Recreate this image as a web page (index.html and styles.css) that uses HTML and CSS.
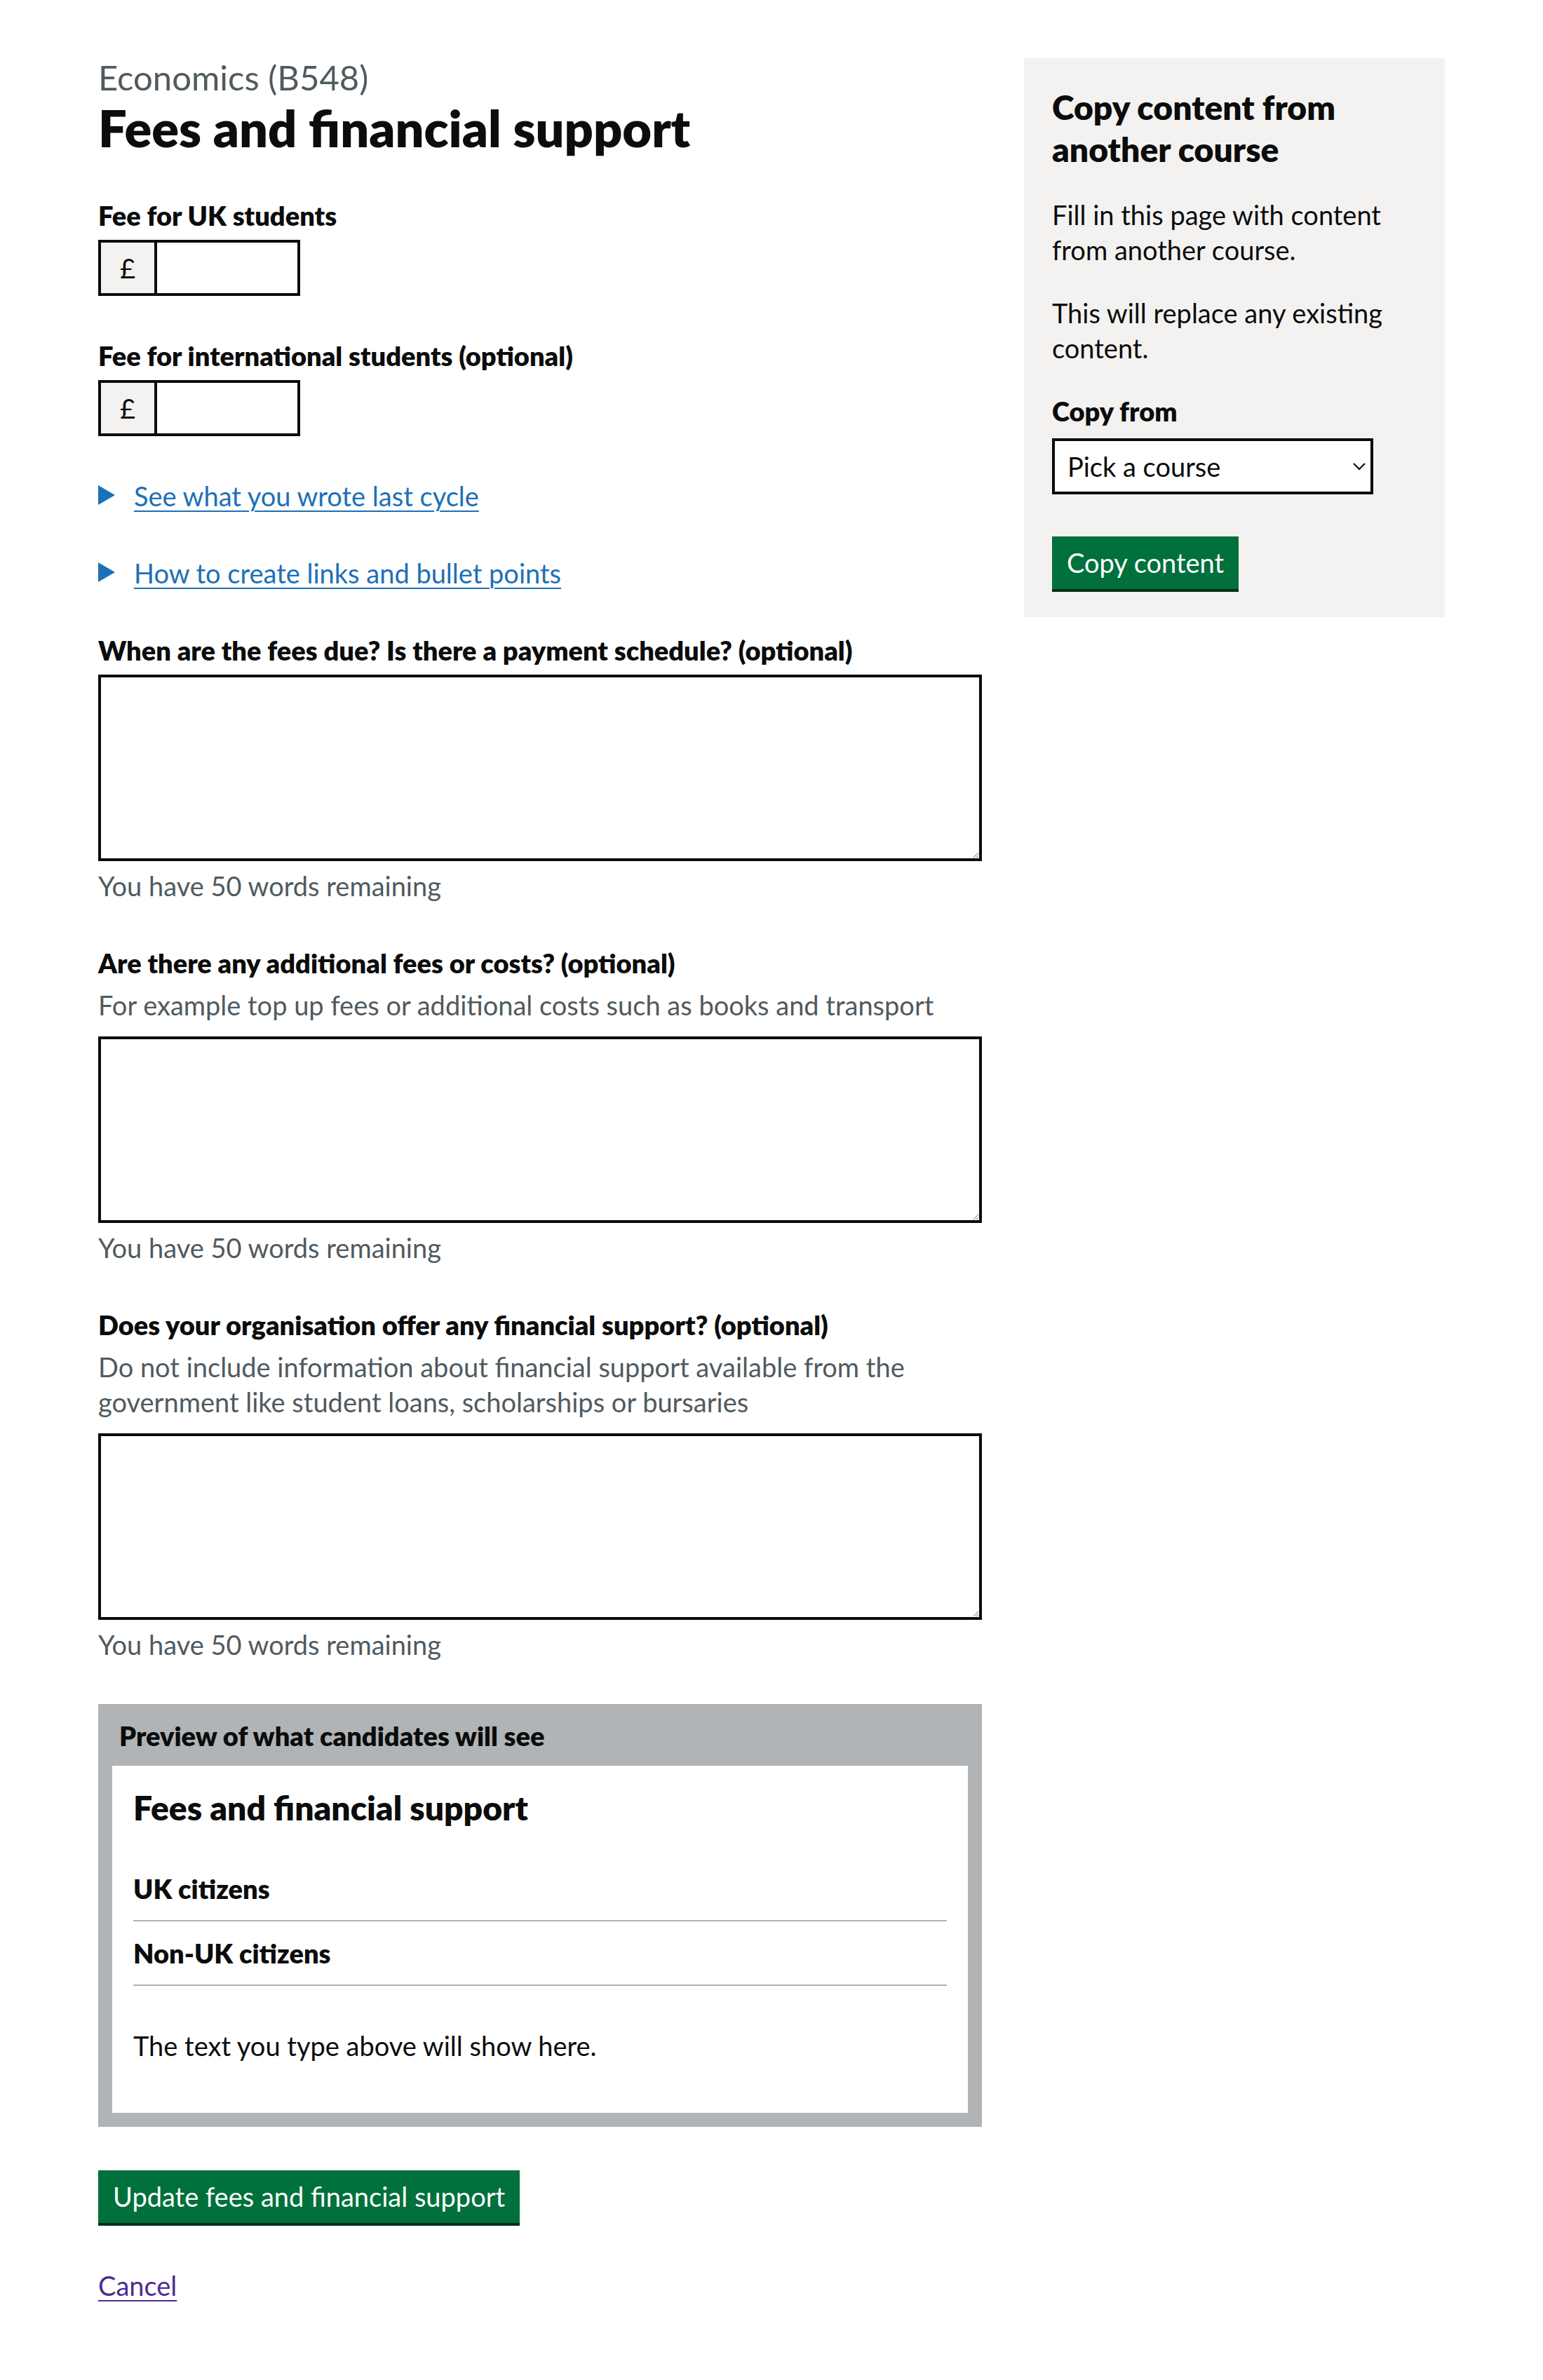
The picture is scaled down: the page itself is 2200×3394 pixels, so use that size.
FILE: index.html
```html
<!DOCTYPE html>
<html lang="en">
<head>
<meta charset="utf-8">
<title>Fees and financial support</title>
<link rel="stylesheet" href="styles.css">
</head>
<body>
<div class="page">
  <div class="layout">
    <main class="main-col">
      <span class="caption">Economics (B548)</span>
      <h1 class="title">Fees and financial support</h1>

      <div class="field">
        <label class="label" for="fee-uk">Fee for UK students</label>
        <div class="input-wrap">
          <span class="prefix">£</span>
          <input class="input-fee" id="fee-uk" type="text">
        </div>
      </div>

      <div class="field">
        <label class="label" for="fee-int">Fee for international students (optional)</label>
        <div class="input-wrap">
          <span class="prefix">£</span>
          <input class="input-fee" id="fee-int" type="text">
        </div>
      </div>

      <details class="details">
        <summary class="summary"><span class="arrow"></span><span class="summary-text">See what you wrote last cycle</span></summary>
      </details>

      <details class="details">
        <summary class="summary"><span class="arrow"></span><span class="summary-text">How to create links and bullet points</span></summary>
      </details>

      <div class="field">
        <label class="label" for="fee-schedule">When are the fees due? Is there a payment schedule? (optional)</label>
        <textarea class="textarea" id="fee-schedule"></textarea>
        <div class="count">You have 50 words remaining</div>
      </div>

      <div class="field">
        <label class="label" for="fee-details">Are there any additional fees or costs? (optional)</label>
        <div class="hint">For example top up fees or additional costs such as books and transport</div>
        <textarea class="textarea" id="fee-details"></textarea>
        <div class="count">You have 50 words remaining</div>
      </div>

      <div class="field">
        <label class="label" for="financial-support">Does your organisation offer any financial support? (optional)</label>
        <div class="hint">Do not include information about financial support available from the government like student loans, scholarships or bursaries</div>
        <textarea class="textarea" id="financial-support"></textarea>
        <div class="count">You have 50 words remaining</div>
      </div>

      <div class="preview">
        <div class="preview-header">Preview of what candidates will see</div>
        <div class="preview-body">
          <h2 class="preview-title">Fees and financial support</h2>
          <dl class="summary-list">
            <div class="summary-row"><dt class="summary-key">UK citizens</dt></div>
            <div class="summary-row"><dt class="summary-key">Non-UK citizens</dt></div>
          </dl>
          <p class="preview-text">The text you type above will show here.</p>
        </div>
      </div>

      <button class="button button-main" type="submit">Update fees and financial support</button>

      <p class="cancel-wrap"><a class="cancel" href="#">Cancel</a></p>
    </main>

    <aside class="sidebar">
      <h2 class="sidebar-title">Copy content from another course</h2>
      <p class="body-text">Fill in this page with content from another course.</p>
      <p class="body-text">This will replace any existing content.</p>
      <label class="label label-select" for="copy-from">Copy from</label>
      <div class="select-wrap">
        <select class="select" id="copy-from">
          <option>Pick a course</option>
        </select>
        <svg class="chevron" width="20" height="12" viewBox="0 0 20 12" aria-hidden="true">
          <path d="M2 2 L10 10 L18 2" fill="none" stroke="#0b0c0c" stroke-width="2.2"/>
        </svg>
      </div>
      <button class="button button-copy" type="button">Copy content</button>
    </aside>
  </div>
</div>
</body>
</html>
```

FILE: styles.css
```css
html, body {
  margin: 0;
  padding: 0;
  background: #ffffff;
}

body {
  font-family: Lato, "Liberation Sans", Arial, sans-serif;
  color: #0b0c0c;
}

.page {
  width: 1920px;
  margin: 0 auto;
  padding-top: 80px;
}

.layout {
  display: flex;
  align-items: flex-start;
  gap: 60px;
}

.main-col {
  width: 1260px;
  flex: 0 0 1260px;
  display: flex;
  flex-direction: column;
  align-items: flex-start;
}

.caption {
  display: block;
  font-size: 49px;
  line-height: 60px;
  color: #505a5f;
  margin-bottom: 2px;
}

.title {
  font-size: 72px;
  line-height: 80px;
  font-weight: 800;
  margin: 0 0 60px;
}

.field {
  display: flex;
  flex-direction: column;
  align-items: flex-start;
  margin-bottom: 60px;
  width: 100%;
}

.label {
  display: block;
  font-size: 38px;
  line-height: 50px;
  font-weight: 800;
  margin-bottom: 10px;
}

.input-wrap {
  display: flex;
  height: 80px;
}

.prefix {
  box-sizing: border-box;
  width: 80px;
  height: 80px;
  display: flex;
  align-items: center;
  justify-content: center;
  background: #f3f2f1;
  border: 4px solid #0b0c0c;
  border-right: 0;
  font-size: 38px;
}

.input-fee {
  box-sizing: border-box;
  width: 208px;
  height: 80px;
  margin: 0;
  padding: 0 10px;
  border: 4px solid #0b0c0c;
  border-radius: 0;
  font-family: inherit;
  font-size: 38px;
}

.details {
  margin-bottom: 60px;
}

.summary {
  display: flex;
  align-items: center;
  list-style: none;
  cursor: pointer;
  font-size: 38px;
  line-height: 50px;
  color: #1d70b8;
}

.summary::-webkit-details-marker {
  display: none;
}

.arrow {
  width: 0;
  height: 0;
  border-style: solid;
  border-width: 14px 0 14px 24px;
  border-color: transparent transparent transparent #1d70b8;
  margin-right: 27px;
  margin-top: -2px;
}

.summary-text {
  text-decoration: underline;
  text-decoration-thickness: 2px;
  text-underline-offset: 6px;
}

.hint {
  font-size: 38px;
  line-height: 50px;
  color: #505a5f;
  margin-bottom: 20px;
}

.textarea {
  box-sizing: border-box;
  display: block;
  width: 1260px;
  height: 266px;
  margin: 0 0 10px;
  padding: 10px;
  border: 4px solid #0b0c0c;
  border-radius: 0;
  font-family: inherit;
  font-size: 38px;
  line-height: 50px;
}

.count {
  font-size: 38px;
  line-height: 50px;
  color: #505a5f;
}

.preview {
  box-sizing: border-box;
  width: 1260px;
  background: #b1b4b6;
  padding: 20px;
  margin-bottom: 62px;
}

.preview-header {
  font-size: 38px;
  line-height: 50px;
  font-weight: 800;
  padding: 0 10px 18px;
}

.preview-body {
  background: #ffffff;
  padding: 30px;
}

.preview-title {
  font-size: 48px;
  line-height: 60px;
  font-weight: 800;
  margin: 0 0 40px;
}

.summary-list {
  margin: 0 0 60px;
}

.summary-row {
  border-bottom: 2px solid #b1b4b6;
  padding: 20px 0;
}

.summary-key {
  font-size: 38px;
  line-height: 50px;
  font-weight: 800;
  margin: 0;
}

.preview-text {
  font-size: 38px;
  line-height: 50px;
  margin: 0 0 41px;
}

.button {
  box-sizing: border-box;
  display: inline-block;
  height: 75px;
  margin: 0;
  padding: 0 21px;
  border: 0;
  border-radius: 0;
  background: #00703c;
  box-shadow: 0 4px 0 #002d18;
  color: #ffffff;
  font-family: inherit;
  font-size: 38px;
  line-height: 75px;
  cursor: pointer;
}

.button-main {
  margin-bottom: 64px;
}

.cancel-wrap {
  margin: 0;
  font-size: 38px;
  line-height: 50px;
}

.cancel {
  color: #4c2c92;
  text-decoration: underline;
  text-decoration-thickness: 2px;
  text-underline-offset: 6px;
}

.sidebar {
  box-sizing: border-box;
  width: 600px;
  flex: 0 0 600px;
  margin-top: 3px;
  background: #f3f2f1;
  padding: 40px;
}

.sidebar-title {
  font-size: 48px;
  line-height: 60px;
  font-weight: 800;
  margin: 0 0 38px;
}

.body-text {
  font-size: 38px;
  line-height: 50px;
  margin: 0 0 40px;
}

.label-select {
  margin-bottom: 14px;
}

.select-wrap {
  position: relative;
  width: 458px;
  margin: 0 0 60px;
}

.select {
  box-sizing: border-box;
  display: block;
  width: 458px;
  height: 80px;
  margin: 0;
  padding: 0 40px 0 18px;
  border: 4px solid #0b0c0c;
  border-radius: 0;
  background: #ffffff;
  color: #0b0c0c;
  font-family: inherit;
  font-size: 38px;
  -webkit-appearance: none;
  appearance: none;
}

.chevron {
  position: absolute;
  right: 10px;
  top: 34px;
  pointer-events: none;
}

.button-copy {
  display: block;
}
```
